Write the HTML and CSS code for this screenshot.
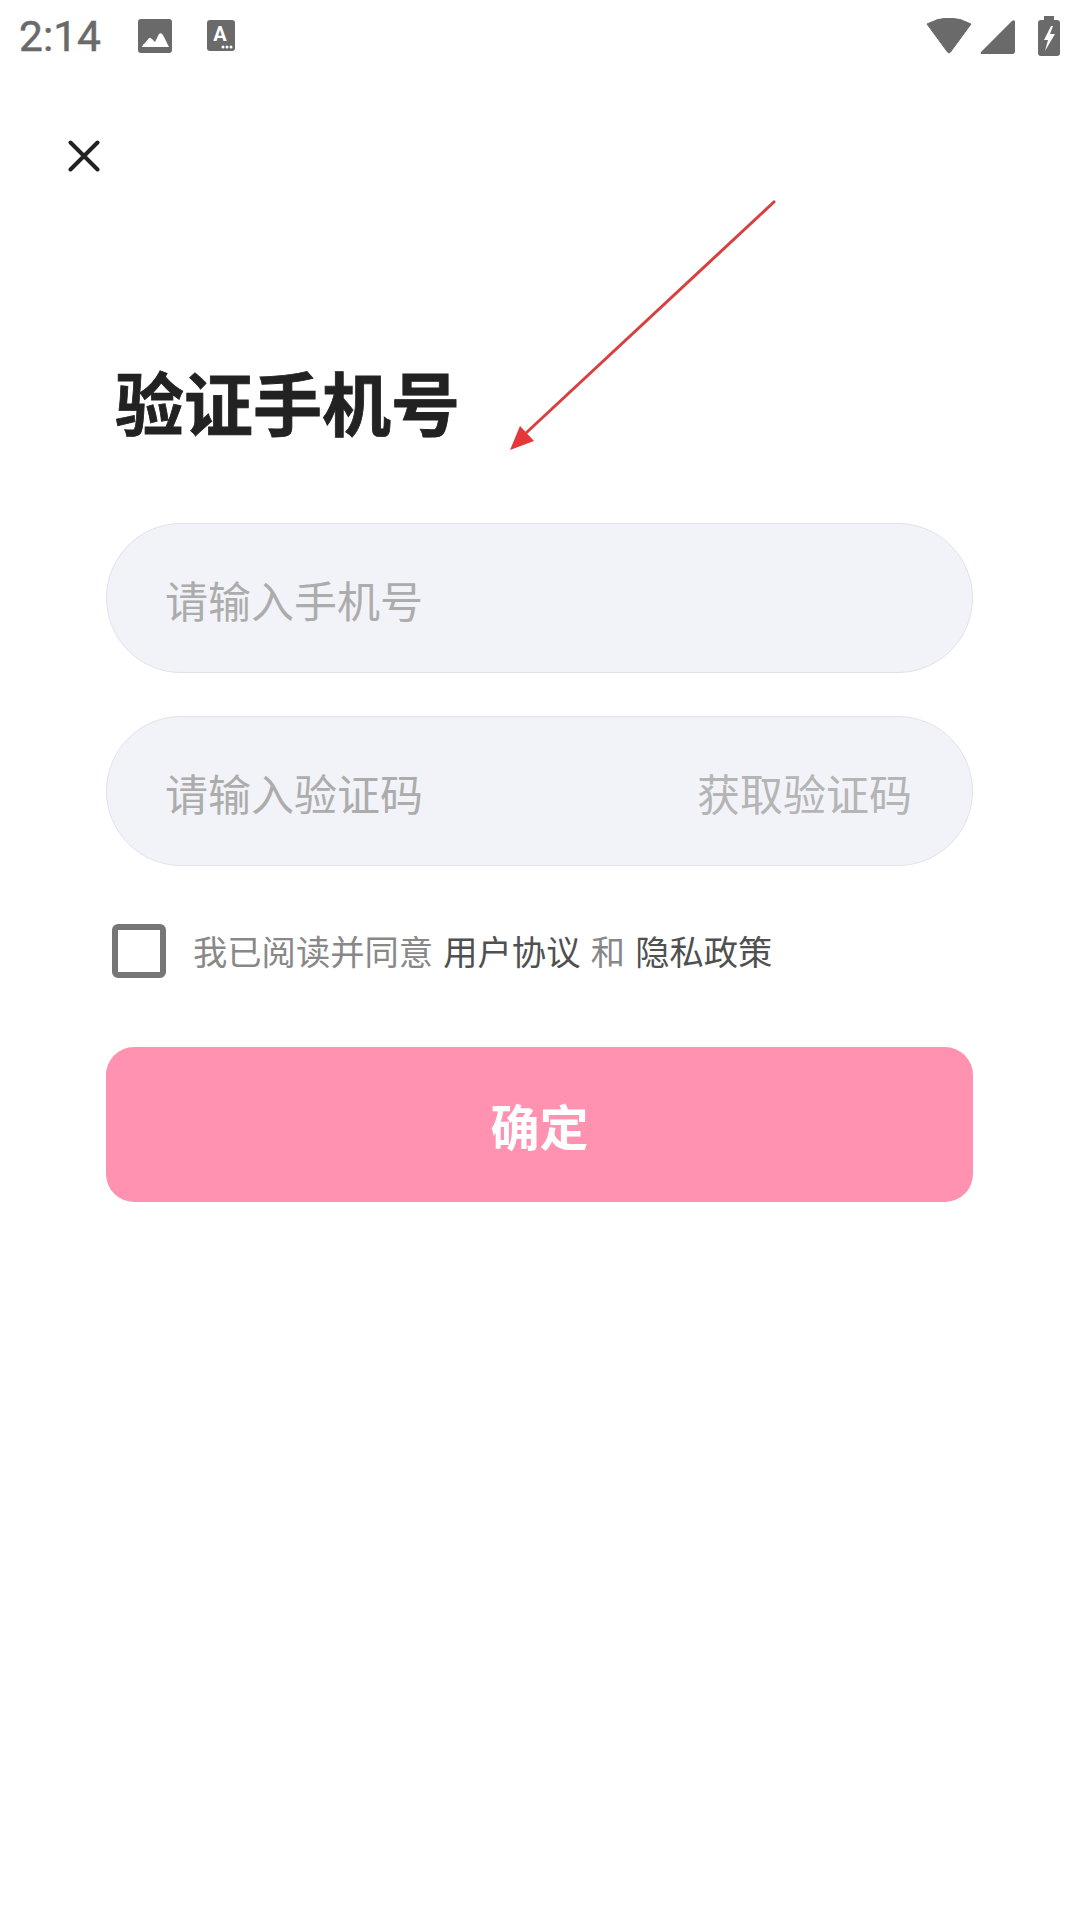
FILE: index.html
```html
<!DOCTYPE html>
<html lang="zh-CN">
<head>
<meta charset="utf-8">
<title>验证手机号</title>
<link rel="stylesheet" href="styles.css">
</head>
<body>
<div class="screen">
  <header class="status-bar">
    <span class="clock">2:14</span>
    <svg class="ic-photo" viewBox="0 0 34 34"><rect width="34" height="34" rx="3" fill="#6a6a6a"/><path d="M4 28 Q5 25 7 24 L11 19 Q12 18 14 20 L17 23 L21 15 Q23 13 25 16 L31 28 Z" fill="#fff"/></svg>
    <svg class="ic-font" viewBox="0 0 28 32"><rect width="28" height="31" rx="3" fill="#6a6a6a"/><text x="13" y="21" class="ic-font-letter">A</text><circle cx="16" cy="27" r="1.5" fill="#fff"/><circle cx="20" cy="27" r="1.5" fill="#fff"/><circle cx="24" cy="27" r="1.5" fill="#fff"/></svg>
    <span class="status-spacer"></span>
    <svg class="ic-wifi" viewBox="0 0 46 36"><path d="M1 6 Q23 -6 45 6 L24.5 34 Q23 36 21.5 34 Z" fill="#6a6a6a" stroke="#6a6a6a" stroke-linejoin="round"/></svg>
    <svg class="ic-signal" viewBox="0 0 34 34"><path d="M1 32 L31 2 Q34 0 34 3 L34 31 Q34 34 31 34 L2 34 Q0 34 1 32 Z" fill="#6a6a6a"/></svg>
    <svg class="ic-battery" viewBox="0 0 22 40"><path d="M6 0 H16 V4 H19 Q22 4 22 7 V37 Q22 40 19 40 H3 Q0 40 0 37 V7 Q0 4 3 4 H6 Z" fill="#6a6a6a"/><path d="M13 10 L6 24 H10 L7 35 L17 18 H12 L15 10 Z" fill="#fff"/></svg>
  </header>

  <button class="close" type="button" aria-label="关闭">
    <svg viewBox="0 0 32 32"><path d="M2.500 2.500 L29.500 29.500 M29.500 2.500 L2.500 29.500" stroke="#222" stroke-width="4" stroke-linecap="round" fill="none"/></svg>
  </button>

  <main class="form">
    <h1 class="title">验证手机号</h1>
    <div class="field"><span class="hint">请输入手机号</span></div>
    <div class="field"><span class="hint">请输入验证码</span><span class="code-link">获取验证码</span></div>
    <div class="agree">
      <span class="checkbox"></span>
      <p class="agree-text">我已阅读并同意 <b>用户协议</b> 和 <b>隐私政策</b></p>
    </div>
    <button class="submit" type="button">确定</button>
  </main>

  <svg class="arrow" viewBox="0 0 1080 1920"><line x1="775" y1="201" x2="526" y2="433" stroke="#d8403f" stroke-width="3"/><path d="M510 450 L520 426 L534 441 Z" fill="#e5373a"/></svg>
</div>
</body>
</html>
```
FILE: styles.css
```css
* { box-sizing: border-box; }
html, body { margin: 0; padding: 0; }
body {
  width: 1080px;
  height: 1920px;
  background: #fff;
  font-family: "Noto Sans CJK SC", "Noto Sans", sans-serif;
  overflow: hidden;
}
.screen { position: relative; width: 1080px; height: 1920px; }

.status-bar {
  display: flex;
  align-items: center;
  height: 72px;
  padding: 0 20px 0 19px;
}
.clock {
  font-family: Roboto, sans-serif;
  font-size: 42.500px;
  color: #6a6a6a;
  -webkit-text-stroke: 0.5px #6a6a6a;
  width: 119px;
}
.ic-photo { width: 34px; height: 34px; margin-right: 35px; }
.ic-font { width: 28px; height: 32px; }
.ic-font-letter { font-family: Roboto, sans-serif; font-size: 20px; font-weight: 700; fill: #fff; text-anchor: middle; }
.status-spacer { flex: 1; }
.ic-wifi { width: 46px; height: 36px; margin: 0 8px 1px 0; }
.ic-signal { width: 35px; height: 35px; margin-right: 23px; }
.ic-battery { width: 22px; height: 40px; margin-bottom: 1px; }

.close {
  display: block;
  margin: 68px 0 0 68px;
  padding: 0;
  width: 32px;
  height: 32px;
  border: 0;
  background: none;
}
.close svg { display: block; width: 32px; height: 32px; }

.form { display: flex; flex-direction: column; margin: 0 107px 0 106px; width: 867px; }
.title {
  margin: 0 0 0 9px;
  padding-top: 184px;
  font-size: 69px;
  line-height: 90px;
  font-weight: 700;
  color: #222;
  -webkit-text-stroke: 0.8px #222;
}
.field {
  display: flex;
  align-items: center;
  justify-content: space-between;
  height: 150px;
  margin-top: 43px;
  padding: 2px 60px 0 58px;
  background: #f2f3f8;
  border: 1px solid #e2e3e8;
  border-radius: 75px;
  font-size: 43px;
}
.title + .field { margin-top: 77px; }
.hint { color: #acacac; }
.code-link { color: #b5b5b5; }

.agree { display: flex; align-items: center; margin-top: 58px; padding-left: 6px; }
.checkbox {
  width: 54px;
  height: 54px;
  border: 6px solid #767676;
  border-radius: 6px;
}
.agree-text { margin: -2px 0 0 27px; font-size: 34.300px; word-spacing: 2.500px; color: #888; }
.agree-text b { font-weight: 400; color: #505050; }

.submit {
  height: 155px;
  margin-top: 69px;
  border: 0;
  border-radius: 28px;
  background: #ff92b0;
  color: #fff;
  font-family: inherit;
  font-size: 49px;
  font-weight: 700;
}

.arrow { position: absolute; left: 0; top: 0; width: 1080px; height: 1920px; pointer-events: none; }
```
